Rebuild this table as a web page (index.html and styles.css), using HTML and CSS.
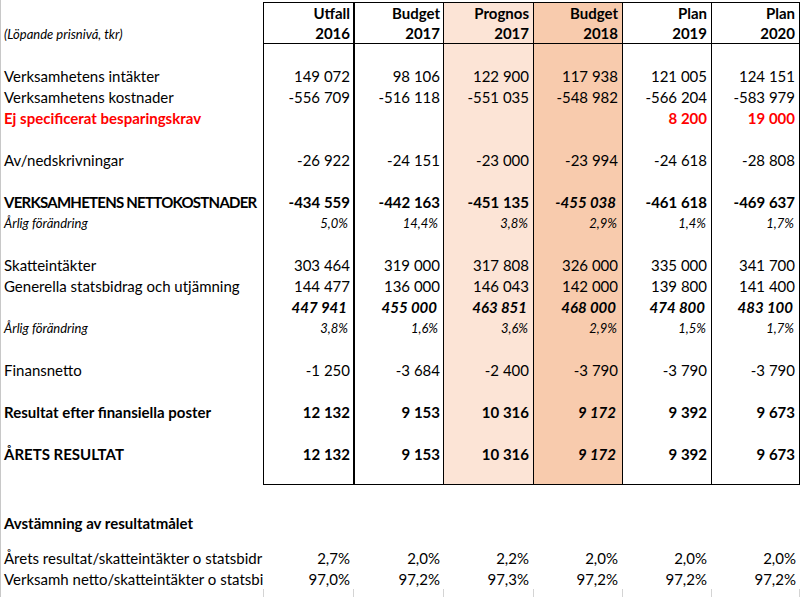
FILE: index.html
```html
<!DOCTYPE html>
<html lang="sv">
<head>
<meta charset="utf-8">
<title>Resultatbudget</title>
<link rel="stylesheet" href="styles.css">
</head>
<body>
<div class="sheet">
  <div class="row t h1"><span></span><span class="b">Utfall</span><span class="b">Budget</span><span class="b">Prognos</span><span class="b">Budget</span><span class="b">Plan</span><span class="b">Plan</span></div>
  <div class="row t h2"><span class="note">(Löpande prisnivå, tkr)</span><span class="b">2016</span><span class="b">2017</span><span class="b">2017</span><span class="b">2018</span><span class="b">2019</span><span class="b">2020</span></div>
  <div class="row t"><span></span><span></span><span></span><span></span><span></span><span></span><span></span></div>
  <div class="row t"><span>Verksamhetens intäkter</span><span>149 072</span><span>98 106</span><span>122 900</span><span>117 938</span><span>121 005</span><span>124 151</span></div>
  <div class="row t"><span>Verksamhetens kostnader</span><span>-556 709</span><span>-516 118</span><span>-551 035</span><span>-548 982</span><span>-566 204</span><span>-583 979</span></div>
  <div class="row t"><span class="b red">Ej specificerat besparingskrav</span><span></span><span></span><span></span><span></span><span class="b red">8 200</span><span class="b red">19 000</span></div>
  <div class="row t"><span></span><span></span><span></span><span></span><span></span><span></span><span></span></div>
  <div class="row t"><span>Av/nedskrivningar</span><span>-26 922</span><span>-24 151</span><span>-23 000</span><span>-23 994</span><span>-24 618</span><span>-28 808</span></div>
  <div class="row t"><span></span><span></span><span></span><span></span><span></span><span></span><span></span></div>
  <div class="row t"><span class="b caps">VERKSAMHETENS NETTOKOSTNADER</span><span class="b">-434 559</span><span class="b">-442 163</span><span class="b">-451 135</span><span class="bi">-455 038</span><span class="b">-461 618</span><span class="b">-469 637</span></div>
  <div class="row t"><span class="note">Årlig förändring</span><span class="pct">5,0%</span><span class="pct">14,4%</span><span class="pct">3,8%</span><span class="pct">2,9%</span><span class="pct">1,4%</span><span class="pct">1,7%</span></div>
  <div class="row t"><span></span><span></span><span></span><span></span><span></span><span></span><span></span></div>
  <div class="row t"><span>Skatteintäkter</span><span>303 464</span><span>319 000</span><span>317 808</span><span>326 000</span><span>335 000</span><span>341 700</span></div>
  <div class="row t"><span>Generella statsbidrag och utjämning</span><span>144 477</span><span>136 000</span><span>146 043</span><span>142 000</span><span>139 800</span><span>141 400</span></div>
  <div class="row t"><span></span><span class="bi">447 941</span><span class="bi">455 000</span><span class="bi">463 851</span><span class="bi">468 000</span><span class="bi">474 800</span><span class="bi">483 100</span></div>
  <div class="row t"><span class="note">Årlig förändring</span><span class="pct">3,8%</span><span class="pct">1,6%</span><span class="pct">3,6%</span><span class="pct">2,9%</span><span class="pct">1,5%</span><span class="pct">1,7%</span></div>
  <div class="row t"><span></span><span></span><span></span><span></span><span></span><span></span><span></span></div>
  <div class="row t"><span>Finansnetto</span><span>-1 250</span><span>-3 684</span><span>-2 400</span><span>-3 790</span><span>-3 790</span><span>-3 790</span></div>
  <div class="row t"><span></span><span></span><span></span><span></span><span></span><span></span><span></span></div>
  <div class="row t"><span class="b">Resultat efter finansiella poster</span><span class="b">12 132</span><span class="b">9 153</span><span class="b">10 316</span><span class="bi">9 172</span><span class="b">9 392</span><span class="b">9 673</span></div>
  <div class="row t"><span></span><span></span><span></span><span></span><span></span><span></span><span></span></div>
  <div class="row t"><span class="b">ÅRETS RESULTAT</span><span class="b">12 132</span><span class="b">9 153</span><span class="b">10 316</span><span class="bi">9 172</span><span class="b">9 392</span><span class="b">9 673</span></div>
  <div class="row t last"><span></span><span></span><span></span><span></span><span></span><span></span><span></span></div>

  <div class="row"><span></span><span></span><span></span><span></span><span></span><span></span><span></span></div>
  <div class="row tall"><span class="b">Avstämning av resultatmålet</span><span></span><span></span><span></span><span></span><span></span><span></span></div>
  <div class="gap"></div>
  <div class="row"><span>Årets resultat/skatteintäkter o statsbidr</span><span>2,7%</span><span>2,0%</span><span>2,2%</span><span>2,0%</span><span>2,0%</span><span>2,0%</span></div>
  <div class="row"><span>Verksamh netto/skatteintäkter o statsbi</span><span>97,0%</span><span>97,2%</span><span>97,3%</span><span>97,2%</span><span>97,2%</span><span>97,2%</span></div>
  <div class="row grid-stub"><span></span><span></span><span></span><span></span><span></span><span></span><span></span></div>
</div>
</body>
</html>
```

FILE: styles.css
```css
* {
  box-sizing: border-box;
}

body {
  margin: 0;
  background: #ffffff;
  color: #000000;
  font-family: Lato, "Open Sans", sans-serif;
  font-size: 15px;
}

.sheet {
  width: 800px;
  height: 597px;
  overflow: hidden;
  border-left: 1px solid #c8c8c8;
  padding-top: 2px;
}

.row {
  display: grid;
  grid-template-columns: 262px 90px 90px 90px 89px 89px 89px;
  height: 21px;
}

.row > span {
  display: flex;
  align-items: flex-end;
  justify-content: flex-end;
  padding: 0 4px 1px 0;
  line-height: 18px;
  white-space: nowrap;
  overflow: hidden;
}

.row > span:first-child {
  justify-content: flex-start;
  padding-left: 3px;
  padding-right: 0;
}

.row > span:nth-child(2),
.row > span:nth-child(3) {
  padding-right: 3px;
}

/* bordered table columns */
.t > span:nth-child(2) { border-left: 1px solid #000; }
.t > span:nth-child(3) { border-left: 2px solid #000; }
.t > span:nth-child(4) { border-left: 1px solid #000; background: #fce4d6; }
.t > span:nth-child(5) { border-left: 1px solid #000; background: #f8cbad; }
.t > span:nth-child(6) { border-left: 1px solid #000; }
.t > span:nth-child(7) { border-left: 1px solid #000; border-right: 1px solid #000; }

.h1 > span:not(:first-child) { border-top: 1px solid #000; }
.h2 > span:not(:first-child),
.last > span:not(:first-child) { border-bottom: 1px solid #000; }

.b { font-weight: 700; }
.bi { font-weight: 700; font-style: italic; }
.row > span.bi { padding-right: 6px; }

.caps { letter-spacing: -0.75px; }

.red { color: #ff0000; }

.note {
  font-style: italic;
  font-size: 13px;
}

.row > span.pct {
  font-style: italic;
  font-size: 13px;
  padding-right: 5px;
}

.tall { height: 27px; }

.gap { height: 14px; }

.grid-stub { height: 12px; }
.grid-stub > span:nth-child(n+2) { border-left: 1px solid #d4d4d4; }
.grid-stub > span:nth-child(7) { border-right: 1px solid #d4d4d4; }
```
